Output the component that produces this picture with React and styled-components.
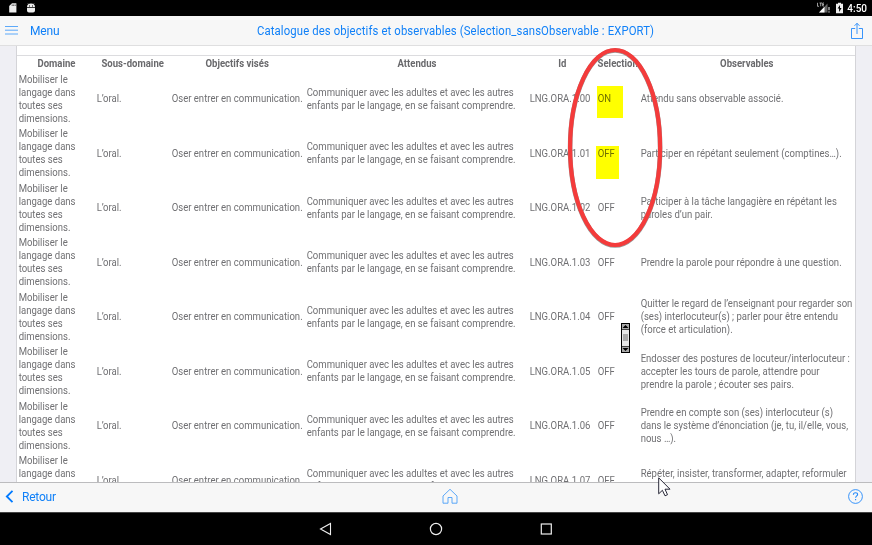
import React from "react";
import styled, { createGlobalStyle } from "styled-components";

const Global = createGlobalStyle`
  * { box-sizing: border-box; }
  body { margin: 0; background: #000; font-family: Roboto, sans-serif; }
`;

const Screen = styled.div`
  position: relative;
  display: flex;
  flex-direction: column;
  width: 872px;
  height: 545px;
  overflow: hidden;
  background: #efeff4;
`;

const StatusBar = styled.div`
  display: flex;
  align-items: center;
  flex: 0 0 16px;
  padding: 0 5px 0 8px;
  background: #000;
  color: #fff;
  font-size: 10px;
  font-weight: 500;
`;

const StatusIcon = styled.svg`
  display: block;
  flex: none;
  width: ${(p) => p.$w}px;
  height: 12px;
  margin-right: ${(p) => p.$gap}px;
`;

const Spacer = styled.div`
  flex: 1;
`;

const TopBar = styled.header`
  display: grid;
  grid-template-columns: 30px 1fr 18px;
  align-items: center;
  flex: 0 0 30px;
  padding: 0 4px 0 5px;
  background: #f7f7f7;
  border-bottom: 1px solid #dfdfe0;
  color: #1080f8;
`;

const MenuLabel = styled.span`
  grid-area: 1 / 2;
  padding-top: 1px;
  margin-left: -5px;
  font-size: 12px;
  letter-spacing: -0.15px;
`;

const Title = styled.h1`
  grid-area: 1 / 2;
  justify-self: center;
  margin: 0 0 0 27px;
  font-size: 12px;
  font-weight: 400;
  line-height: 14px;
  letter-spacing: 0.13px;
  white-space: nowrap;
  transform: scaleX(0.943);
`;

const Icon = styled.svg`
  display: block;
  overflow: visible;
`;

const Content = styled.main`
  flex: 0 0 436px;
  margin: 0 16px;
  overflow: hidden;
  background: #fff;
  border-left: 1px solid #d4d4d8;
  border-right: 1px solid #d4d4d8;
  color: #707073;
  font-size: 10.3px;
  line-height: 13px;
`;

const Lead = styled.div`
  height: 10px;
  border-bottom: 1px solid #dcdcdf;
`;

const Row = styled.div`
  display: grid;
  grid-template-columns: 78px 74.5px 135px 223px 68px 43px 216.5px;
  align-items: center;
  height: ${(p) => (p.$head ? 15.5 : 54.5)}px;
  padding-left: 2px;
`;

const HeadCell = styled.div`
  display: flex;
  justify-content: center;
  padding-right: 3px;
  margin-top: -1px;
  color: #69696c;
  font-weight: 700;
`;

const Cell = styled.div`
  position: relative;
`;

const Label = styled.span`
  display: block;
  width: max-content;
  white-space: pre;
  transform: scaleX(0.927);
  transform-origin: ${(p) => (p.$center ? "center" : "-5px")};
`;

const Mark = styled.span`
  position: absolute;
  left: ${(p) => p.$x}px;
  top: ${(p) => p.$y}px;
  width: ${(p) => p.$w}px;
  height: ${(p) => p.$h}px;
  background: #ff0;
  mix-blend-mode: multiply;
`;

const BottomBar = styled.footer`
  display: grid;
  grid-template-columns: 437px 16px 1fr;
  align-items: center;
  flex: 0 0 31px;
  padding: 0 9px 2px 5px;
  background: #f7f7f7;
  border-top: 1px solid #bcbcbe;
  border-bottom: 1px solid #444;
  color: #1080f8;
  font-size: 12px;
  letter-spacing: -0.2px;
`;

const Back = styled.div`
  display: flex;
  align-items: center;
  gap: 8px;
`;

const Help = styled.div`
  justify-self: end;
`;

const NavBar = styled.nav`
  display: flex;
  justify-content: center;
  align-items: center;
  flex: 1;
  gap: 96px;
  padding: 0 0 1px;
  background: #000;
`;

const Overlay = styled.svg`
  position: absolute;
  left: ${(p) => p.$x}px;
  top: ${(p) => p.$y}px;
  overflow: visible;
  pointer-events: none;
`;

const headers = ["Domaine", "Sous-domaine", "Objectifs visés", "Attendus", "Id", "Selection", "Observables"];

const rows = [
  { id: "00", state: "ON", text: "Attendu sans observable associé.", mark: [-0.5, -6, 26, 32] },
  { id: "01", state: "OFF", text: "Participer en répétant seulement (comptines…).", mark: [-1.5, -0.6, 23, 33] },
  { id: "02", state: "OFF", text: "Participer à la tâche langagière en répétant les\nparoles d’un pair." },
  { id: "03", state: "OFF", text: "Prendre la parole pour répondre à une question." },
  { id: "04", state: "OFF", text: "Quitter le regard de l’enseignant pour regarder son\n(ses) interlocuteur(s) ; parler pour être entendu\n(force et articulation)." },
  { id: "05", state: "OFF", text: "Endosser des postures de locuteur/interlocuteur :\naccepter les tours de parole, attendre pour\nprendre la parole ; écouter ses pairs." },
  { id: "06", state: "OFF", text: "Prendre en compte son (ses) interlocuteur (s)\ndans le système d’énonciation (je, tu, il/elle, vous,\nnous …)." },
  { id: "07", state: "OFF", text: "Répéter, insister, transformer, adapter, reformuler\n " },
];

function ObjectiveRow({ row }) {
  return (
    <Row>
      <Cell><Label>{"Mobiliser le\nlangage dans\ntoutes ses\ndimensions."}</Label></Cell>
      <Cell><Label>L’oral.</Label></Cell>
      <Cell><Label>Oser entrer en communication.</Label></Cell>
      <Cell>
        <Label>{"Communiquer avec les adultes et avec les autres\nenfants par le langage, en se faisant comprendre."}</Label>
      </Cell>
      <Cell><Label>LNG.ORA.1.{row.id}</Label></Cell>
      <Cell>
        <Label>{row.state}</Label>
        {row.mark && <Mark $x={row.mark[0]} $y={row.mark[1]} $w={row.mark[2]} $h={row.mark[3]} />}
      </Cell>
      <Cell><Label>{row.text}</Label></Cell>
    </Row>
  );
}

export default function App() {
  return (
    <Screen>
      <Global />
      <StatusBar>
        <StatusIcon $w={10} $gap={8} viewBox="0 0 10 12">
          <path d="M4 1.3h4.4v9.2H1.2V4z" fill="#eee" />
          <path d="M4.2 2.5v1.5M5.7 2.5v1.5M7.2 2.5v1.5" stroke="#000" strokeWidth=".6" />
        </StatusIcon>
        <StatusIcon $w={10} $gap={0} viewBox="0 0 10 12">
          <path d="M1 5.3a4 3.7 0 0 1 8 0zM1 6h8v2.5q0 2-2 2H3q-2 0-2-2z" fill="#eee" />
          <path d="M2 1.5l1 1.2M8 1.5l-1 1.2" stroke="#eee" strokeWidth=".7" />
          <path d="M3 4h1M6 4h1" stroke="#000" />
        </StatusIcon>
        <Spacer />
        <StatusIcon $w={13} $gap={5.5} viewBox="0 0 13 12">
          <path d="M.5.8v3.5H2M2.5 1H5M3.7 1v3.3M7 1H5.7v3H7M5.7 2.5H7" fill="none" stroke="#ddd" strokeWidth=".7" />
          <path d="M10.5 1.5v9H2z" fill="#666" />
          <path d="M7.5 4.8v5.7H2z" fill="#fff" />
          <path d="M12 5v3.3M12 9.3v1.3" stroke="#fff" />
        </StatusIcon>
        <StatusIcon $w={7} $gap={4.5} viewBox="0 0 7 12">
          <path d="M0 1.8h2V.8h3v1h2v9.4H0z" fill="#eee" />
          <path d="M4 3L1.6 6.6h1.5V10l2.5-4H4z" fill="#000" />
        </StatusIcon>
        4:50
      </StatusBar>
      <TopBar>
        <Icon width="13" height="10" viewBox="0 0 13 10">
          <path d="M0 .5h13M0 4.2h13M0 8h13" stroke="#4b9ff8" strokeWidth=".9" />
        </Icon>
        <MenuLabel>Menu</MenuLabel>
        <Title>Catalogue des objectifs et observables (Selection_sansObservable : EXPORT)</Title>
        <Icon width="14" height="18" viewBox="0 0 14 18">
          <path d="M5.2 6.5H1.5v10h11v-10H8.8M7 12V1.3M4.5 3.8L7 1.3l2.5 2.5" fill="none" stroke="#2389fa" strokeWidth=".9" />
        </Icon>
      </TopBar>
      <Content>
        <Lead />
        <Row $head>
          {headers.map((name) => (
            <HeadCell key={name}><Label $center>{name}</Label></HeadCell>
          ))}
        </Row>
        {rows.map((row) => (
          <ObjectiveRow key={row.id} row={row} />
        ))}
      </Content>
      <BottomBar>
        <Back>
          <Icon width="9" height="13" viewBox="0 0 9 13">
            <path d="M7.5.8L1.8 6.5l5.7 5.7" fill="none" stroke="#007aff" strokeWidth="1.8" />
          </Icon>
          Retour
        </Back>
        <Icon width="16" height="16" viewBox="0 0 16 16">
          <path d="M1 7L8 .3l7 6.7v7.2h-5V8.5H6v5.7H1z" fill="none" stroke="#4b9ff8" strokeWidth=".9" />
        </Icon>
        <Help>
          <Icon width="15" height="15" viewBox="0 0 15 15">
            <circle cx="7.5" cy="7.5" r="6.9" fill="none" stroke="#2389fa" strokeWidth=".9" />
            <path d="M5.4 5.7q0-2 2.1-2t2.1 1.8c0 1.3-2 1.6-2 3.3M7.6 9.9v1.4" fill="none" stroke="#2389fa" strokeWidth="1.1" />
          </Icon>
        </Help>
      </BottomBar>
      <NavBar>
        <Icon width="14" height="14" viewBox="0 0 14 14">
          <path d="M11.5 1.5v11L1.5 7z" fill="none" stroke="#eee" strokeWidth="1.1" />
        </Icon>
        <Icon width="14" height="14" viewBox="0 0 14 14">
          <circle cx="7" cy="7" r="5.6" fill="none" stroke="#eee" strokeWidth="1.2" />
        </Icon>
        <Icon width="14" height="14" viewBox="0 0 14 14">
          <rect x="2.3" y="2" width="10" height="10" fill="none" stroke="#eee" strokeWidth="1.2" />
        </Icon>
      </NavBar>
      <Overlay $x={567} $y={47} width="96" height="202">
        <ellipse cx="48.1" cy="101" rx="45" ry="97.5" fill="none" stroke="#999" strokeWidth="4.6" />
        <ellipse cx="48.1" cy="100.5" rx="45" ry="97.5" fill="none" stroke="#f43b3b" strokeWidth="4.2" />
      </Overlay>
      <Overlay $x={621} $y={323} width="9" height="30">
        <rect x=".5" y=".5" width="8" height="29" fill="#e7e7e7" stroke="#000" />
        <path d="M1 1h7v5H1zM1 24h7v5H1z" fill="#aaa" />
        <path d="M1 6.5h7M1 23.5h7" stroke="#000" strokeWidth=".7" />
        <path d="M1.5 5h6l-3-3zM1.5 25h6l-3 3z" fill="#000" />
        <rect x="2" y="11" width="5" height="7" fill="#aaa" />
      </Overlay>
      <Overlay $x={658} $y={477} width="12" height="20">
        <path d="M.7.8v16l3.7-3.5L7 18.8l2.5-1.1L7 12.2h5z" fill="#fff" stroke="#111122" strokeWidth=".9" />
      </Overlay>
    </Screen>
  );
}
